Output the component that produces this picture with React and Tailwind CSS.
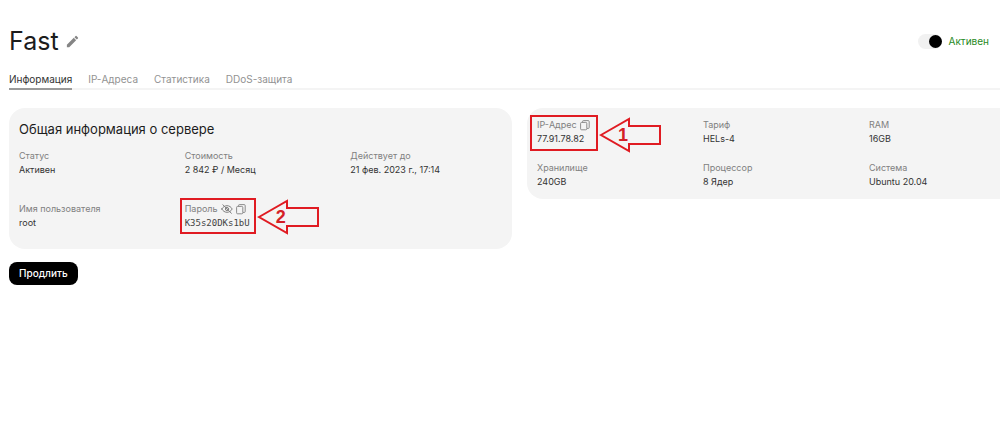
import { useState } from "react";
import { MdEdit } from "react-icons/md";

function CopyIcon() {
  return (
    <svg viewBox="0 0 10 11" className="h-[11px] w-[10px]" fill="none" stroke="currentColor" strokeWidth="0.9">
      <rect x="0.6" y="2.4" width="6.2" height="7.4" rx="1" />
      <path d="M2.600 2.300V1.400a.8.8 0 0 1 .8-.8h4.800a1 1 0 0 1 1 1v6a.8.8 0 0 1-.8.8H7" />
    </svg>
  );
}

function EyeOffIcon() {
  return (
    <svg viewBox="0 0 12 10" className="h-[10px] w-3" fill="none" stroke="currentColor" strokeWidth="1" strokeLinecap="round">
      <path d="M.8 5C2 2.9 3.8 1.7 6 1.7S10 2.9 11.2 5C10 7.1 8.2 8.3 6 8.3S2 7.1.8 5Z" />
      <circle cx="6" cy="5" r="1.6" />
      <path d="M1.8.7l8.6 8.6" />
    </svg>
  );
}

function Arrow({ label, className }) {
  return (
    <div className={`absolute h-9 ${className}`}>
      <svg viewBox="0 0 64 36" className="h-9 w-16" fill="none" stroke="#e01b22" strokeWidth="2">
        <path d="M2 18 30 2V9H61V27H30V34Z" />
      </svg>
      <span className="absolute inset-y-0 left-[19px] font-['Liberation_Sans',sans-serif] text-lg/9 font-bold text-[#d42027]">{label}</span>
    </div>
  );
}

function Field({ label, value, actions, mono, children }) {
  return (
    <div className="relative">
      <dt className="flex items-center gap-[3px] text-[9px]/[14px] text-[#808080]">
        {label}
        {actions}
      </dt>
      <dd className={mono ? "font-['DejaVu_Sans_Mono',monospace] text-[9px]/[14px] text-[#444]" : "text-[9px]/[14px] text-[#333]"}>{value}</dd>
      {children}
    </div>
  );
}

function IconButton({ label, children }) {
  return (
    <button type="button" aria-label={label} className="flex cursor-pointer text-[#808080]">
      {children}
    </button>
  );
}

const tabs = ["Информация", "IP-Адреса", "Статистика", "DDoS-защита"];

export default function App() {
  const [active, setActive] = useState(true);
  return (
    <main className="bg-white pl-[9px] pt-[23px] font-[Inter,sans-serif] text-[#1c1c1c]">
      <header className="flex items-center justify-between pr-[11px]">
        <div className="flex items-center gap-1.5">
          <h1 className="text-[25px]/9">Fast</h1>
          <button type="button" aria-label="Переименовать" className="cursor-pointer text-[#858585]">
            <MdEdit className="size-[15px]" />
          </button>
        </div>
        <label className="flex cursor-pointer items-center gap-[7px] text-[10px]/4 text-[#1f8a24]">
          <input type="checkbox" role="switch" checked={active} onChange={(e) => setActive(e.target.checked)} className="peer sr-only" />
          <span className="flex h-[15px] w-6 items-center rounded-full bg-[#f1f1f1] peer-checked:justify-end">
            <span className="size-[13px] rounded-full bg-black" />
          </span>
          Активен
        </label>
      </header>

      <nav className="mt-[13px] flex gap-4 border-b-2 border-[#f4f4f4] text-[10px]/[14px]">
        {tabs.map((tab, i) => (
          <a
            key={tab}
            href="#"
            className={i === 0 ? "-mb-0.5 border-b-2 border-[#9a9a9a] pb-0.5 text-[#333]" : "pb-0.5 text-[#929292]"}
          >
            {tab}
          </a>
        ))}
      </nav>

      <div className="mt-[18px] grid grid-cols-[503fr_473fr] items-start gap-[15px]">
        <section className="rounded-2xl bg-[#f4f4f4] px-2.5 pb-[19px] pt-3">
          <h2 className="text-[13px]/[18px]">Общая информация о сервере</h2>
          <dl className="mt-[11px] grid grid-cols-3 gap-x-3.5 gap-y-[25px]">
            <Field label="Статус" value="Активен" />
            <Field label="Стоимость" value="2 842 ₽ / Месяц" />
            <Field label="Действует до" value="21 фев. 2023 г., 17:14" />
            <Field label="Имя пользователя" value="root" />
            <Field
              label="Пароль"
              value="K35s20DKs1bU"
              mono
              actions={
                <>
                  <IconButton label="Показать пароль"><EyeOffIcon /></IconButton>
                  <IconButton label="Скопировать пароль"><CopyIcon /></IconButton>
                </>
              }
            >
              <div className="pointer-events-none absolute -left-[5px] -top-1 h-9 w-[76px] border-2 border-[#e01b22]" />
              <Arrow label="2" className="-top-[3px] left-[72px]" />
            </Field>
          </dl>
        </section>

        <section className="rounded-l-2xl bg-[#f4f4f4] py-2.5 pl-2.5">
          <dl className="grid grid-cols-[152fr_152fr_131fr] gap-x-3.5 gap-y-[15px]">
            <Field
              label="IP-Адрес"
              value="77.91.78.82"
              actions={<IconButton label="Скопировать IP-адрес"><CopyIcon /></IconButton>}
            >
              <div className="pointer-events-none absolute -left-[7px] -top-[3px] h-9 w-[68px] border-2 border-[#e01b22]" />
              <Arrow label="1" className="-top-[1px] left-[62px]" />
            </Field>
            <Field label="Тариф" value="HELs-4" />
            <Field label="RAM" value="16GB" />
            <Field label="Хранилище" value="240GB" />
            <Field label="Процессор" value="8 Ядер" />
            <Field label="Система" value="Ubuntu 20.04" />
          </dl>
        </section>
      </div>

      <button type="button" className="mt-[13px] cursor-pointer rounded-lg bg-black px-2.5 py-1 text-[10px]/[15px] font-medium text-white">
        Продлить
      </button>
    </main>
  );
}
